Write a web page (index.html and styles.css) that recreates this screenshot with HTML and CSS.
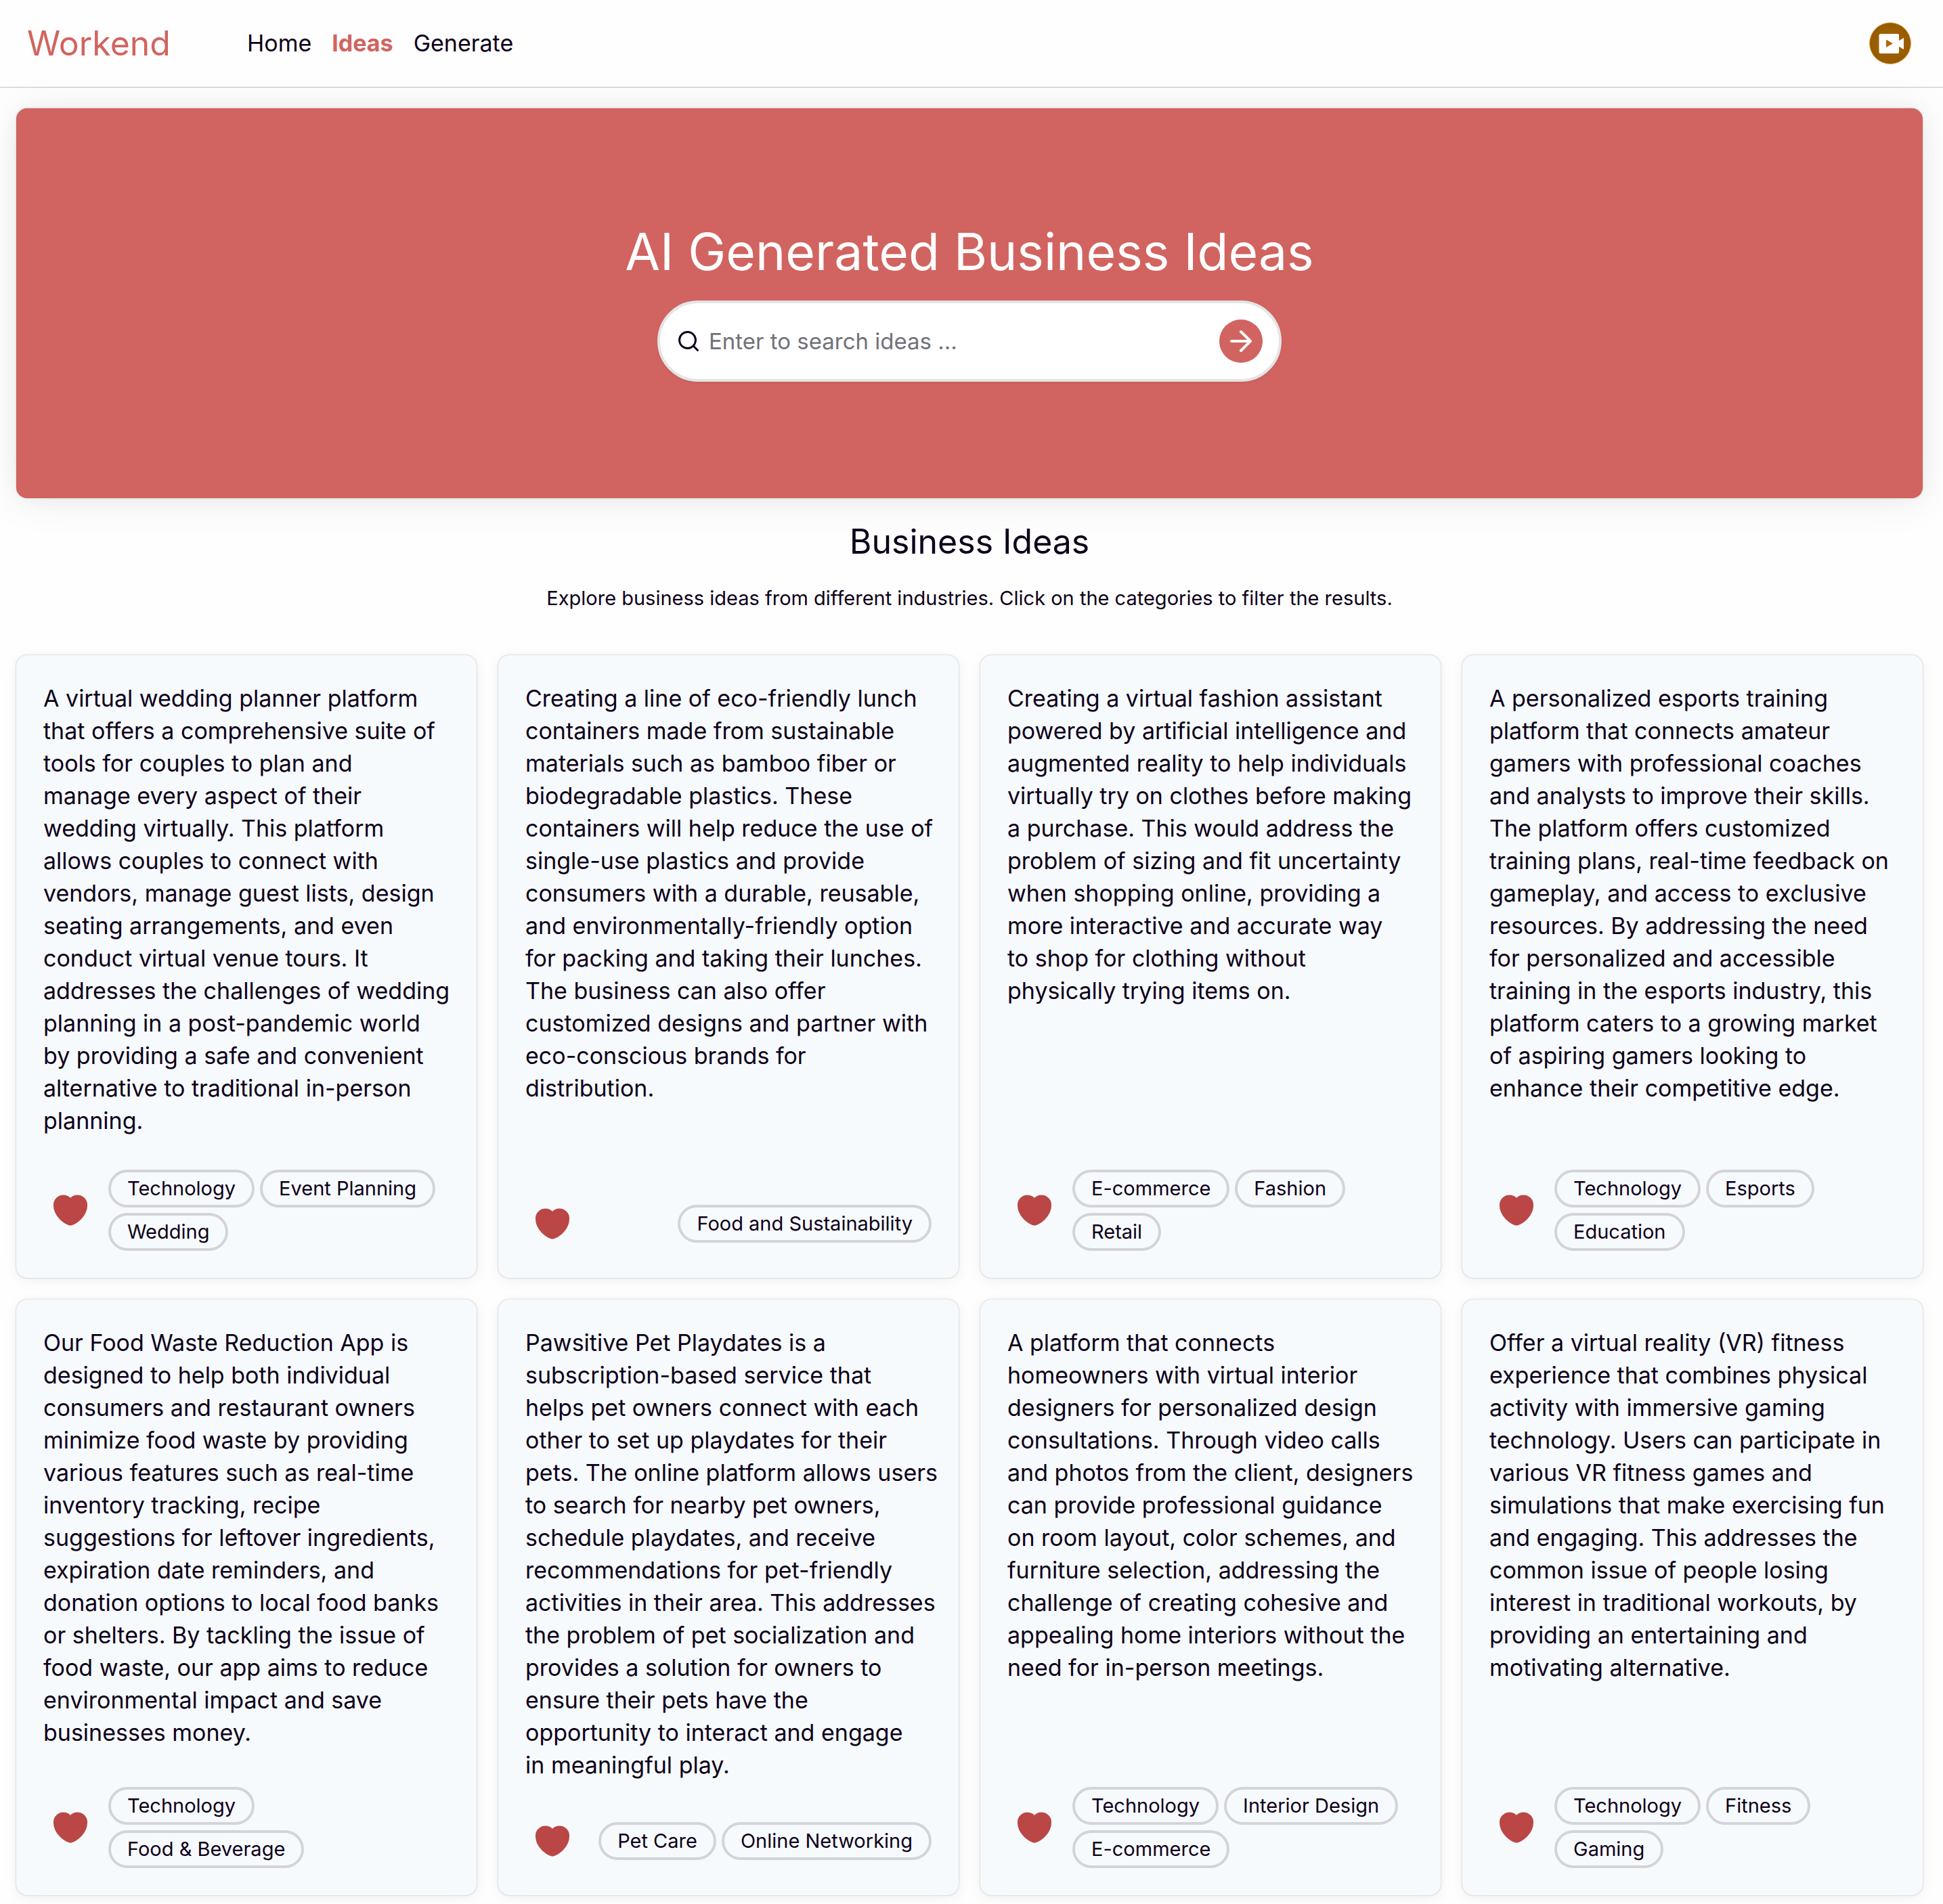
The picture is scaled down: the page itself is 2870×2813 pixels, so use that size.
FILE: index.html
```html
<!DOCTYPE html>
<html lang="en">
<head>
<meta charset="utf-8">
<meta name="viewport" content="width=device-width, initial-scale=1">
<title>Workend - Business Ideas</title>
<link rel="stylesheet" href="styles.css">
</head>
<body>
<svg class="sprite" aria-hidden="true">
  <symbol id="heart" viewBox="0 0 24 24"><path d="M12.62 20.81c-.34.12-.9.12-1.24 0C8.48 19.82 2 15.69 2 8.69 2 5.6 4.49 3.1 7.56 3.1c1.82 0 3.43.88 4.44 2.24a5.53 5.53 0 0 1 4.44-2.24C19.51 3.1 22 5.6 22 8.69c0 7-6.48 11.13-9.38 12.12Z" fill="currentColor" stroke="currentColor" stroke-width="1.5" stroke-linecap="round" stroke-linejoin="round"/></symbol>
</svg>
<header class="topbar">
  <a class="brand" href="#">Workend</a>
  <nav class="nav">
    <a class="nav-link" href="#">Home</a>
    <a class="nav-link active" href="#" aria-current="page">Ideas</a>
    <a class="nav-link" href="#">Generate</a>
  </nav>
  <button class="avatar" type="button" aria-label="Account">
    <svg viewBox="0 0 62 62" aria-hidden="true">
      <defs><radialGradient id="avatar-fill"><stop offset="0" stop-color="#ab6800"/><stop offset="1" stop-color="#945900"/></radialGradient></defs>
      <circle cx="31" cy="31" r="30.5" fill="url(#avatar-fill)" stroke="#e8a850"/>
      <rect x="14.5" y="17" width="29.5" height="29" rx="2" fill="#fff"/>
      <path d="M43.500 27.500 51 23v17l-7.500-4.500Z" fill="#fff"/>
      <path d="M25 25.500v11.500l10-5.700Z" fill="#b06a08"/>
    </svg>
  </button>
</header>
<main class="page">
  <section class="hero">
    <h1 class="hero-title">AI Generated Business Ideas</h1>
    <form class="search">
      <svg class="search-icon" viewBox="0 0 24 24" aria-hidden="true"><circle cx="11" cy="11" r="8"/><path d="m21 21-4.300-4.300"/></svg>
      <input class="search-input" type="text" placeholder="Enter to search ideas ..." aria-label="Search ideas">
      <button class="search-go" type="submit" aria-label="Search"><svg viewBox="0 0 24 24" aria-hidden="true"><path d="M5 12h14M12 5l7 7-7 7"/></svg></button>
    </form>
  </section>
  <section class="intro">
    <h2 class="intro-title">Business Ideas</h2>
    <p class="intro-text">Explore business ideas from different industries. Click on the categories to filter the results.</p>
  </section>
  <section class="grid">
    <article class="card">
      <p class="idea">A virtual wedding planner platform<br>that offers a comprehensive suite of<br>tools for couples to plan and<br>manage every aspect of their<br>wedding virtually. This platform<br>allows couples to connect with<br>vendors, manage guest lists, design<br>seating arrangements, and even<br>conduct virtual venue tours. It<br>addresses the challenges of wedding<br>planning in a post-pandemic world<br>by providing a safe and convenient<br>alternative to traditional in-person<br>planning.</p>
      <footer class="card-foot">
        <button class="like" type="button" aria-label="Like"><svg><use href="#heart"/></svg></button>
        <div class="tags"><button class="tag" type="button">Technology</button><button class="tag" type="button">Event Planning</button><button class="tag" type="button">Wedding</button></div>
      </footer>
    </article>
    <article class="card">
      <p class="idea">Creating a line of eco-friendly lunch<br>containers made from sustainable<br>materials such as bamboo fiber or<br>biodegradable plastics. These<br>containers will help reduce the use of<br>single-use plastics and provide<br>consumers with a durable, reusable,<br>and environmentally-friendly option<br>for packing and taking their lunches.<br>The business can also offer<br>customized designs and partner with<br>eco-conscious brands for<br>distribution.</p>
      <footer class="card-foot">
        <button class="like" type="button" aria-label="Like"><svg><use href="#heart"/></svg></button>
        <div class="tags"><button class="tag" type="button">Food and Sustainability</button></div>
      </footer>
    </article>
    <article class="card">
      <p class="idea">Creating a virtual fashion assistant<br>powered by artificial intelligence and<br>augmented reality to help individuals<br>virtually try on clothes before making<br>a purchase. This would address the<br>problem of sizing and fit uncertainty<br>when shopping online, providing a<br>more interactive and accurate way<br>to shop for clothing without<br>physically trying items on.</p>
      <footer class="card-foot">
        <button class="like" type="button" aria-label="Like"><svg><use href="#heart"/></svg></button>
        <div class="tags"><button class="tag" type="button">E-commerce</button><button class="tag" type="button">Fashion</button><button class="tag" type="button">Retail</button></div>
      </footer>
    </article>
    <article class="card">
      <p class="idea">A personalized esports training<br>platform that connects amateur<br>gamers with professional coaches<br>and analysts to improve their skills.<br>The platform offers customized<br>training plans, real-time feedback on<br>gameplay, and access to exclusive<br>resources. By addressing the need<br>for personalized and accessible<br>training in the esports industry, this<br>platform caters to a growing market<br>of aspiring gamers looking to<br>enhance their competitive edge.</p>
      <footer class="card-foot">
        <button class="like" type="button" aria-label="Like"><svg><use href="#heart"/></svg></button>
        <div class="tags"><button class="tag" type="button">Technology</button><button class="tag" type="button">Esports</button><button class="tag" type="button">Education</button></div>
      </footer>
    </article>
    <article class="card">
      <p class="idea">Our Food Waste Reduction App is<br>designed to help both individual<br>consumers and restaurant owners<br>minimize food waste by providing<br>various features such as real-time<br>inventory tracking, recipe<br>suggestions for leftover ingredients,<br>expiration date reminders, and<br>donation options to local food banks<br>or shelters. By tackling the issue of<br>food waste, our app aims to reduce<br>environmental impact and save<br>businesses money.</p>
      <footer class="card-foot">
        <button class="like" type="button" aria-label="Like"><svg><use href="#heart"/></svg></button>
        <div class="tags"><button class="tag" type="button">Technology</button><button class="tag" type="button">Food &amp; Beverage</button></div>
      </footer>
    </article>
    <article class="card">
      <p class="idea">Pawsitive Pet Playdates is a<br>subscription-based service that<br>helps pet owners connect with each<br>other to set up playdates for their<br>pets. The online platform allows users<br>to search for nearby pet owners,<br>schedule playdates, and receive<br>recommendations for pet-friendly<br>activities in their area. This addresses<br>the problem of pet socialization and<br>provides a solution for owners to<br>ensure their pets have the<br>opportunity to interact and engage<br>in meaningful play.</p>
      <footer class="card-foot">
        <button class="like" type="button" aria-label="Like"><svg><use href="#heart"/></svg></button>
        <div class="tags"><button class="tag" type="button">Pet Care</button><button class="tag" type="button">Online Networking</button></div>
      </footer>
    </article>
    <article class="card">
      <p class="idea">A platform that connects<br>homeowners with virtual interior<br>designers for personalized design<br>consultations. Through video calls<br>and photos from the client, designers<br>can provide professional guidance<br>on room layout, color schemes, and<br>furniture selection, addressing the<br>challenge of creating cohesive and<br>appealing home interiors without the<br>need for in-person meetings.</p>
      <footer class="card-foot">
        <button class="like" type="button" aria-label="Like"><svg><use href="#heart"/></svg></button>
        <div class="tags"><button class="tag" type="button">Technology</button><button class="tag" type="button">Interior Design</button><button class="tag" type="button">E-commerce</button></div>
      </footer>
    </article>
    <article class="card">
      <p class="idea">Offer a virtual reality (VR) fitness<br>experience that combines physical<br>activity with immersive gaming<br>technology. Users can participate in<br>various VR fitness games and<br>simulations that make exercising fun<br>and engaging. This addresses the<br>common issue of people losing<br>interest in traditional workouts, by<br>providing an entertaining and<br>motivating alternative.</p>
      <footer class="card-foot">
        <button class="like" type="button" aria-label="Like"><svg><use href="#heart"/></svg></button>
        <div class="tags"><button class="tag" type="button">Technology</button><button class="tag" type="button">Fitness</button><button class="tag" type="button">Gaming</button></div>
      </footer>
    </article>
  </section>
</main>
</body>
</html>
```

FILE: styles.css
```css
:root {
  --accent: #d16460;
  --ink: #0e0019;
  --line: #d4d3d8;
}

* {
  box-sizing: border-box;
}

body {
  margin: 0;
  background: #fefefe;
  color: var(--ink);
  font-family: "Inter", sans-serif;
  font-size: 34px;
  line-height: 48px;
}

h1, h2, p {
  margin: 0;
  font-weight: 400;
}

a {
  color: inherit;
  text-decoration: none;
}

button {
  padding: 0;
  border: 0;
  background: none;
  color: inherit;
  font: inherit;
  cursor: pointer;
}

.sprite {
  display: none;
}

.topbar {
  display: flex;
  align-items: center;
  height: 130px;
  padding: 0 47px 0 40px;
  border-bottom: 2px solid #dcdcdc;
}

.brand {
  width: 325px;
  color: var(--accent);
  font-size: 50px;
}

.nav {
  display: flex;
  gap: 30px;
}

.nav-link.active {
  color: var(--accent);
  font-weight: 700;
}

.avatar {
  width: 62px;
  height: 62px;
  margin-left: auto;
}

.avatar svg,
.like svg,
.search-go svg {
  display: block;
}

.page {
  padding: 30px 30px 12px 24px;
}

.hero {
  display: flex;
  flex-direction: column;
  align-items: center;
  gap: 32px;
  padding: 172px 24px;
  border-radius: 16px;
  background: var(--accent);
  color: #fff;
  box-shadow: 0 0 30px rgb(0 0 0 / 3%), 0 4px 60px rgb(0 0 0 / 8%), 0 0 2px rgb(0 0 0 / 30%);
}

.hero-title {
  font-size: 75px;
  line-height: 80px;
  text-align: center;
}

.search {
  display: flex;
  align-items: center;
  gap: 12px;
  width: 100%;
  max-width: 922px;
  height: 120px;
  padding: 0 24px;
  border: 4px solid #e4e4e7;
  border-radius: 60px;
  background: #fff;
  box-shadow: 0 2px 4px rgb(0 0 0 / 5%);
}

.search-icon {
  flex: none;
  width: 36px;
  height: 36px;
  fill: none;
  stroke: var(--ink);
  stroke-width: 2;
  stroke-linecap: round;
}

.search-input {
  flex: 1;
  min-width: 0;
  padding: 0;
  border: 0;
  outline: 0;
  background: none;
  color: var(--ink);
  font: inherit;
  font-size: 33px;
}

.search-input::placeholder {
  color: #71717a;
  opacity: 1;
}

.search-go {
  display: grid;
  place-items: center;
  width: 64px;
  height: 64px;
  border-radius: 50%;
  background: var(--accent);
}

.search-go svg {
  width: 48px;
  height: 48px;
  fill: none;
  stroke: #fff;
  stroke-width: 2;
  stroke-linecap: round;
  stroke-linejoin: round;
}

.intro {
  display: flex;
  flex-direction: column;
  gap: 32px;
  padding: 32px 0 64px;
  text-align: center;
}

.intro-title {
  font-size: 50px;
  line-height: 64px;
}

.intro-text {
  font-size: 29px;
  line-height: 40px;
}

.grid {
  display: grid;
  grid-template-columns: repeat(auto-fill, minmax(640px, 1fr));
  gap: 32px;
}

.card {
  display: flex;
  flex-direction: column;
  padding: 40px;
  border-radius: 16px;
  background: #f6fafd;
  box-shadow: 0 0 10px rgb(0 0 0 / 2%), 0 4px 20px rgb(0 0 0 / 6%), 0 0 2px rgb(0 0 0 / 30%);
}

/* Long lines may run a little way into the card's right padding. */
.idea {
  margin-right: -24px;
}

.card-foot {
  display: flex;
  align-items: center;
  justify-content: space-between;
  gap: 16px;
  margin-top: auto;
  padding-top: 48px;
}

.like {
  display: grid;
  flex: none;
  place-items: center;
  width: 80px;
  height: 80px;
  color: #bb4646;
}

.like svg {
  width: 56px;
  height: 56px;
}

.tags {
  display: flex;
  flex-wrap: wrap;
  gap: 8px;
}

.tag {
  height: 56px;
  padding: 0 24px;
  border: 4px solid var(--line);
  border-radius: 28px;
  font-size: 29px;
  line-height: 48px;
}
```
